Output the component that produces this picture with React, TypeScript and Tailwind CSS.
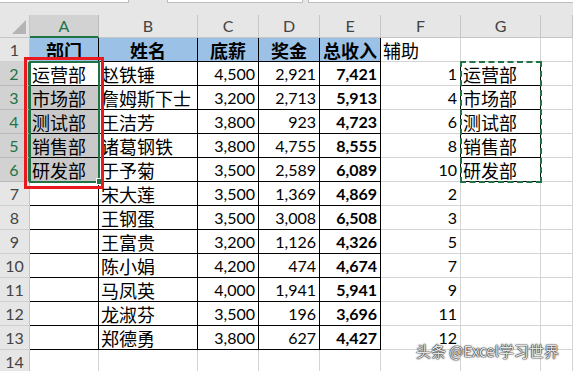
import React from 'react';

const CJK = '"Noto Sans CJK SC", "Noto Sans", sans-serif';
const NUM = 'Lato, "Noto Sans CJK SC", sans-serif';

const cols = ['A', 'B', 'C', 'D', 'E', 'F', 'G', ''];

const names = ['赵铁锤', '詹姆斯下士', '王洁芳', '诸葛钢铁', '于予菊', '宋大莲', '王钢蛋', '王富贵', '陈小娟', '马凤英', '龙淑芬', '郑德勇'];
const base = ['4,500', '3,200', '3,800', '3,800', '3,500', '3,500', '3,500', '3,200', '4,200', '4,000', '3,500', '3,800'];
const bonus = ['2,921', '2,713', '923', '4,755', '2,589', '1,369', '3,008', '1,126', '474', '1,941', '196', '627'];
const total = ['7,421', '5,913', '4,723', '8,555', '6,089', '4,869', '6,508', '4,326', '4,674', '5,941', '3,696', '4,427'];
const helper = ['1', '4', '6', '8', '10', '2', '3', '5', '7', '9', '11', '12'];
const depts = ['运营部', '市场部', '测试部', '销售部', '研发部'];

type CellProps = {
  children?: React.ReactNode;
  align?: 'left' | 'right' | 'center';
  bold?: boolean;
  num?: boolean;
  bg?: string;
  rightBlack?: boolean;
  bottomBlack?: boolean;
};

const Cell = ({ children, align = 'left', bold, num, bg, rightBlack, bottomBlack }: CellProps) => (
  <div
    className={[
      'h-[24px] border-r border-b flex items-center overflow-visible whitespace-nowrap leading-none',
      align === 'right' ? 'justify-end pr-[3px]' : align === 'center' ? 'justify-center' : 'justify-start pl-[2px]',
      bold ? 'font-bold' : 'font-normal',
      num ? 'text-[16px]' : 'text-[18px]',
      rightBlack ? 'border-r-black' : 'border-r-[#d4d4d4]',
      bottomBlack ? 'border-b-black' : 'border-b-[#d4d4d4]',
      'text-black',
    ].join(' ')}
    style={{ fontFamily: num ? NUM : CJK, backgroundColor: bg }}
  >
    {children}
  </div>
);

const RowHead = ({ n, selected }: { n: number; selected?: boolean }) => (
  <div
    className={[
      'h-[24px] border-b border-r flex items-center justify-center text-[16px] leading-none',
      selected ? 'bg-[#d2d2d2] text-[#217346] border-r-[#217346] border-r-2 border-b-[#bababa]' : 'bg-[#e6e6e6] text-[#444] border-r-[#c6c6c6] border-b-[#d0d0d0]',
    ].join(' ')}
    style={{ fontFamily: NUM }}
  >
    {n}
  </div>
);

export default function App() {
  const rows: React.ReactNode[] = [];

  // row 1
  rows.push(
    <React.Fragment key="r1">
      <RowHead n={1} />
      {['部门', '姓名', '底薪', '奖金', '总收入'].map((t) => (
        <Cell key={t} align="center" bold bg="#9bc2e6" rightBlack bottomBlack>
          {t}
        </Cell>
      ))}
      <Cell>辅助</Cell>
      <Cell />
      <Cell />
    </React.Fragment>
  );

  for (let i = 0; i < 13; i++) {
    const r = i + 2;
    const inData = i < 12;
    const sel = r >= 2 && r <= 6;
    rows.push(
      <React.Fragment key={'r' + r}>
        <RowHead n={r} selected={sel} />
        <Cell bg={sel ? (r === 2 ? '#ffffff' : '#c9c9c9') : undefined} rightBlack={inData} bottomBlack={inData}>
          {sel ? depts[i] : ''}
        </Cell>
        <Cell rightBlack={inData} bottomBlack={inData}>{inData ? names[i] : ''}</Cell>
        <Cell num align="right" rightBlack={inData} bottomBlack={inData}>{inData ? base[i] : ''}</Cell>
        <Cell num align="right" rightBlack={inData} bottomBlack={inData}>{inData ? bonus[i] : ''}</Cell>
        <Cell num bold align="right" rightBlack={inData} bottomBlack={inData}>{inData ? total[i] : ''}</Cell>
        <Cell num align="right" rightBlack={sel}>{inData ? helper[i] : ''}</Cell>
        <Cell rightBlack={sel} bottomBlack={sel}>{sel ? depts[i] : ''}</Cell>
        <Cell />
      </React.Fragment>
    );
  }

  return (
    <div className="w-[573px] h-[371px] overflow-hidden bg-white relative">
      {/* formula bar remnant */}
      <div className="h-[15px] bg-[#e6e6e6] flex items-start">
        <div className="w-[129px] h-[3px] bg-white border-b border-r border-[#bdbdbd]" />
        <div className="w-[38px]" />
        <div className="w-[136px] h-[3px] bg-white border-b border-x border-[#bdbdbd]" />
        <div className="w-[5px]" />
        <div className="flex-1 h-[3px] bg-white border-b border-l border-[#bdbdbd]" />
      </div>

      <div className="grid grid-cols-[30px_69px_99px_61px_61px_61px_80px_80px_1fr]">
        {/* column header */}
        <div className="h-[23px] bg-[#e6e6e6] border-r border-b border-[#c6c6c6] relative">
          <div
            className="absolute right-[3px] bottom-[3px] w-[14px] h-[14px] bg-[#b4b4b4]"
            style={{ clipPath: 'polygon(100% 0, 100% 100%, 0 100%)' }}
          />
        </div>
        {cols.map((c, i) => (
          <div
            key={i}
            className={[
              'h-[23px] flex items-center justify-center text-[16px] leading-none border-r',
              c === 'A' ? 'bg-[#d2d2d2] text-[#217346] border-b-2 border-b-[#217346] border-r-[#bababa]' : 'bg-[#e6e6e6] text-[#444] border-b border-b-[#c6c6c6] border-r-[#c6c6c6]',
            ].join(' ')}
            style={{ fontFamily: NUM }}
          >
            {c}
          </div>
        ))}
        {rows}
      </div>

      {/* selection A2:A6 */}
      <div className="absolute left-[29px] top-[61px] w-[71px] h-[122px] border-2 border-[#217346]" />
      <div className="absolute left-[96px] top-[178px] w-[7px] h-[7px] bg-[#217346] border border-white" />
      {/* red highlight */}
      <div className="absolute left-[24px] top-[57px] w-[80px] h-[132px] border-[3px] border-[#e8191f]" />
      {/* copy marquee G2:G6 */}
      <div className="absolute left-[460px] top-[61px] w-[82px] h-[122px] border-2 border-dashed border-[#217346]" />

      {/* watermark */}
      <div
        className="absolute left-[416px] top-[343px] text-[15px] leading-none text-[#e4e4e4] whitespace-nowrap"
        style={{ fontFamily: CJK, textShadow: '0 0 2px #222, 0 0 1px #222, 0 0 1px #222' }}
      >
        头条 @Excel学习世界
      </div>
    </div>
  );
}
